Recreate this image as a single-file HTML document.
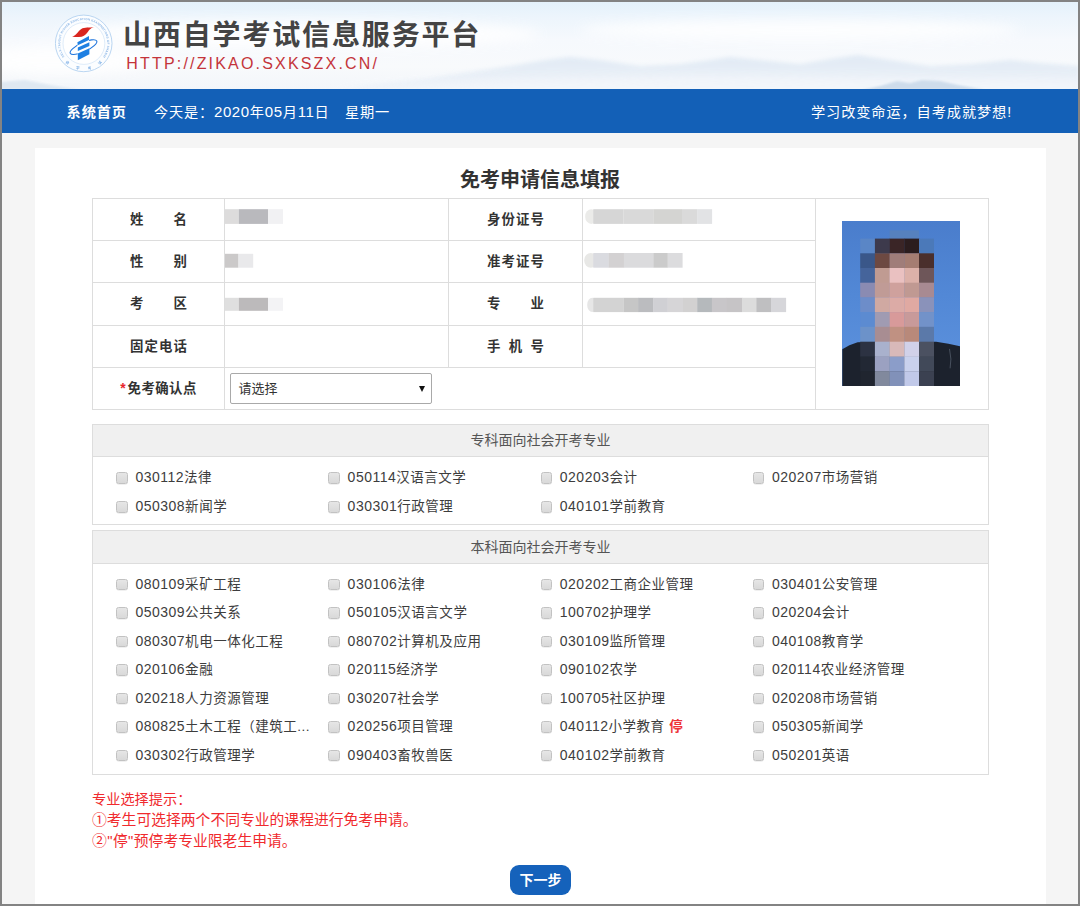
<!DOCTYPE html>
<html lang="zh-CN">
<head>
<meta charset="utf-8">
<title>山西自学考试信息服务平台</title>
<style>
*{box-sizing:border-box;margin:0;padding:0}
html,body{width:1080px;height:906px;overflow:hidden}
body{background:#f5f5f5;font-family:"Liberation Sans","Noto Sans CJK SC",sans-serif;color:#333;position:relative;font-size:14px}
.abs{position:absolute;white-space:nowrap}
#frame{position:absolute;left:0;top:0;width:1080px;height:906px;border:2px solid #838383;z-index:50;pointer-events:none}
#banner{position:absolute;left:0;top:0;width:1080px;height:89px;background:#f6f9fc;overflow:hidden}
#banner svg.sky{position:absolute;left:0;top:0}
#logo{position:absolute;left:54px;top:14px;width:60px;height:60px}
#sitename{left:123px;top:16.2px;font-size:28px;font-weight:bold;color:#444;letter-spacing:1.85px;line-height:40px}
#siteurl{left:126.3px;top:54px;font-size:16px;color:#c4343a;letter-spacing:2.18px;line-height:20px}
#nav{position:absolute;left:0;top:89px;width:1080px;height:44px;background:#1360b7;color:#fff;font-size:14.2px;letter-spacing:.8px;line-height:44px}
#nav em{font-style:normal;font-size:15px;letter-spacing:.6px}
#nav .abs{top:.8px}
#panel{position:absolute;left:35px;top:148px;width:1011px;height:760px;background:#fff}
#ftitle{left:340px;width:400px;text-align:center;top:164.5px;font-size:20px;font-weight:bold;color:#333;line-height:30px}
table#info{position:absolute;left:92px;top:198px;width:896px;height:212px;border-collapse:collapse;table-layout:fixed;font-size:14px}
#info td{border:1px solid #ddd;padding:0;height:42.2px;vertical-align:middle}
#info td.l{text-align:center;font-weight:bold;color:#333;font-size:13.4px}
#info td.l span{display:inline-block;width:57px;position:relative;top:-1.5px;text-align:justify;text-align-last:justify;white-space:nowrap}
.red{color:#e8282c}
.blur{position:absolute;border-radius:6px;filter:blur(.6px)}
#sel{position:absolute;left:230px;top:373px;width:202px;height:31px;border:1px solid #a9a9a9;border-radius:2px;background:#fff;font-size:13px;line-height:30px;padding-left:7.6px;color:#333}
#sel:after{content:"";position:absolute;right:6px;top:12px;border:3.5px solid transparent;border-top:6px solid #111;border-bottom:0}
.sec{position:absolute;left:92px;width:897px;border:1px solid #ddd;background:#fff}
.sec .h{height:33px;background:#f0f0f0;border-bottom:1px solid #ddd;text-align:center;font-size:14px;color:#555;line-height:32px}
.ck{position:absolute;white-space:nowrap;font-size:14px;color:#3d3d3d;line-height:20px;height:20px;display:block}
.ck i{position:absolute;left:1.5px;top:5.2px;width:11.5px;height:11.5px;border:1px solid #c2c2c2;border-radius:2.5px;background:linear-gradient(#e6e6e6,#d9d9d9);box-shadow:0 .5px .5px rgba(0,0,0,.12)}
.ck span{position:absolute;left:20.8px;top:.3px;font-size:13.5px;letter-spacing:.52px}
.ck em{font-style:normal;font-size:14px;letter-spacing:.5px}
.ck b.stop{color:#ee3338;font-weight:bold;font-size:13.5px;margin-left:.5px}
.hint{font-size:14.8px;line-height:20px;color:#f02a2e}
.hint i{font-style:normal;display:inline-block;width:14.8px;text-align:center}
.hint u{text-decoration:none;display:inline-block;width:6.1px;text-align:center}
#next{position:absolute;left:510px;top:865px;width:61px;height:30px;border-radius:9px;background:#1562bb;color:#fff;font-weight:bold;font-size:14px;line-height:30px;text-align:center;border:0}
</style>
</head>
<body>
<div id="banner">
<svg class="sky" width="1080" height="89" viewBox="0 0 1080 89">
<defs>
<linearGradient id="skyg" x1="0" y1="0" x2="0" y2="1">
<stop offset="0" stop-color="#e3f1fb"/><stop offset=".2" stop-color="#edf5fc"/><stop offset=".45" stop-color="#f6f9fd"/><stop offset=".75" stop-color="#f8fafc"/><stop offset="1" stop-color="#f3f6fa"/>
</linearGradient>
<linearGradient id="mtg" x1="0" y1="0" x2="0" y2="1">
<stop offset="0" stop-color="#dfe9f4"/><stop offset="1" stop-color="#eef3f9"/>
</linearGradient>
<filter id="b6" x="-10%" y="-50%" width="120%" height="200%"><feGaussianBlur stdDeviation="6"/></filter>
<filter id="b3" x="-10%" y="-50%" width="120%" height="200%"><feGaussianBlur stdDeviation="2"/></filter>
<filter id="b1" x="-10%" y="-50%" width="120%" height="200%"><feGaussianBlur stdDeviation="1.1"/></filter>
</defs>
<rect width="1080" height="89" fill="url(#skyg)"/>
<g filter="url(#b6)" fill="#ffffff" opacity=".85">
<ellipse cx="300" cy="34" rx="240" ry="14"/><ellipse cx="800" cy="30" rx="220" ry="10"/><ellipse cx="60" cy="60" rx="90" ry="14"/>
</g>
<path filter="url(#b3)" fill="url(#mtg)" opacity=".95" d="M330 92 L380 84 L430 78 L470 72 L510 66 L545 60 L570 57 L600 60 L640 66 L680 64 L710 60 L730 57 L760 60 L800 64 L830 59 L858 55 L890 60 L930 66 L970 64 L1010 60 L1040 63 L1080 66 L1080 92 Z"/>
<path filter="url(#b6)" fill="#f7f9fc" opacity=".7" d="M330 92 L500 80 L700 76 L860 78 L1080 80 L1080 92 Z"/>
<path filter="url(#b1)" fill="#cbdaea" opacity=".9" d="M862 90 L880 86 L897 81 L910 83 L922 80 L940 81 L958 85 L985 90 Z"/>
<path filter="url(#b1)" fill="#dde7f1" opacity=".9" d="M0 90 L0 82 L25 80 L50 85 L80 90 Z"/>
</svg>

<div id="logo"><svg width="60" height="60" viewBox="0 0 60 60" style="filter:blur(.35px)">
<defs>
<path id="arcT" d="M10.79 43.21 A23.5 23.5 0 1 1 48.81 43.21"/>
<path id="arcB" d="M9.73 46.24 A26.2 26.2 0 0 0 49.87 46.24"/>
<clipPath id="bk"><polygon points="23.4,28.3 35,21.5 35.4,40.2 23.8,46.2"/></clipPath>
</defs>
<circle cx="29.7" cy="29.4" r="28.3" fill="#fbfdff" stroke="#a9cbee" stroke-width=".8"/>
<circle cx="29.9" cy="29.5" r="20.9" fill="#ffffff" stroke="#c9dff5" stroke-width=".6"/>
<text font-family="Liberation Sans, sans-serif" font-size="3" font-weight="bold" fill="#8db7e6" textLength="102" lengthAdjust="spacing"><textPath href="#arcT" startOffset=".5" textLength="102" lengthAdjust="spacing">SELF-TAUGHT HIGHER EDUCATION EXAMINATIONS OF SHANXI</textPath></text>
<text font-family="Liberation Sans, Noto Sans CJK SC, sans-serif" font-size="3.6" font-weight="bold" fill="#7fb0e6" letter-spacing="8.6"><textPath href="#arcB" startOffset="2.7">自学考试</textPath></text>
<path d="M18.1 22.5 C22.8 21.6 23.5 17.4 27.3 15 C30.5 13 35 14 40.8 13.1 C36.6 14 35.8 15.6 33.6 18.2 C31.4 20.9 29 23 24.8 23.1 C22 23.2 20 22.9 18.1 22.5 Z" fill="#d9261f"/>
<ellipse cx="29.5" cy="33.1" rx="14.6" ry="4.5" transform="rotate(-24.8 29.5 33.1)" fill="none" stroke="#2277dd" stroke-width="1.1"/>
<polygon points="23.4,28.3 35,21.9 35.4,40.3 23.8,46.3" fill="#ffffff"/>
<polygon points="23.4,28.3 35,21.9 35,26 23.8,31.3" fill="#1f80e2"/>
<polygon points="23.8,33.5 35.4,28.3 35.4,32 23.8,37.1" fill="#1f80e2"/>
<polygon points="23.8,39.5 35.4,34.3 35.4,40.3 23.8,46.3" fill="#1f80e2"/>
</svg>
</div>
<div class="abs" id="sitename">山西自学考试信息服务平台</div>
<div class="abs" id="siteurl">HTTP://ZIKAO.SXKSZX.CN/</div>
</div>
<div id="nav">
<div class="abs" style="left:66.6px;font-weight:bold;letter-spacing:.9px">系统首页</div>
<div class="abs" style="left:154px">今天是：<em>2020</em>年<em>05</em>月<em>11</em>日</div>
<div class="abs" style="left:345px">星期一</div>
<div class="abs" style="left:811px;letter-spacing:.9px">学习改变命运，自考成就梦想!</div>
</div>
<div id="panel"></div>
<div class="abs" id="ftitle">免考申请信息填报</div>
<table id="info">
<colgroup><col style="width:132px"><col style="width:224px"><col style="width:134px"><col style="width:233px"><col style="width:173px"></colgroup>
<tr><td class="l"><span>姓名</span></td><td></td><td class="l"><span>身份证号</span></td><td></td><td rowspan="5" id="pcell"></td></tr>
<tr><td class="l"><span>性别</span></td><td></td><td class="l"><span>准考证号</span></td><td></td></tr>
<tr><td class="l"><span>考区</span></td><td></td><td class="l"><span>专业</span></td><td></td></tr>
<tr><td class="l"><span>固定电话</span></td><td></td><td class="l"><span>手机号</span></td><td></td></tr>
<tr><td class="l"><span style="width:auto;top:-1px;letter-spacing:.45px"><b class="red" style="margin-right:1.4px;font-size:14px">*</b>免考确认点</span></td><td colspan="3"></td></tr>
</table>
<div id="sel">请选择</div>
<svg style="position:absolute;left:842px;top:221px" width="118" height="165" viewBox="0 0 118 165">
<defs><linearGradient id="pbg" x1="0" y1="0" x2="0" y2="1"><stop offset="0" stop-color="#4a7dcc"/><stop offset=".45" stop-color="#5288d6"/><stop offset="1" stop-color="#5e93de"/></linearGradient></defs>
<rect width="118" height="165" fill="url(#pbg)"/>
<polygon points="0.3,128.3 7.4,124.2 15.6,121.3 32.9,120.7 77.0,120.7 94.2,120.7 106.4,122.8 118.3,125.4 118.3,165.0 0.3,165.0" fill="#1c222d"/>
<rect x="47.6" y="9.4" width="29.4" height="8.5" fill="#5681bd"/>
<rect x="18.2" y="17.6" width="15.0" height="15.0" fill="#5a86c6"/>
<rect x="32.9" y="17.6" width="15.0" height="15.0" fill="#3d3a4c"/>
<rect x="47.6" y="17.6" width="15.0" height="15.0" fill="#3a2526"/>
<rect x="62.3" y="17.6" width="15.0" height="15.0" fill="#2b1d1e"/>
<rect x="77.0" y="17.6" width="15.0" height="15.0" fill="#4b79b9"/>
<rect x="18.2" y="32.3" width="15.0" height="15.0" fill="#3a5789"/>
<rect x="32.9" y="32.3" width="15.0" height="15.0" fill="#6d4942"/>
<rect x="47.6" y="32.3" width="15.0" height="15.0" fill="#a07d79"/>
<rect x="62.3" y="32.3" width="15.0" height="15.0" fill="#a57d72"/>
<rect x="77.0" y="32.3" width="15.0" height="15.0" fill="#4a2f2c"/>
<rect x="18.2" y="47.0" width="15.0" height="15.0" fill="#45649b"/>
<rect x="32.9" y="47.0" width="15.0" height="15.0" fill="#c09b92"/>
<rect x="47.6" y="47.0" width="15.0" height="15.0" fill="#eac1c1"/>
<rect x="62.3" y="47.0" width="15.0" height="15.0" fill="#dcb1a9"/>
<rect x="77.0" y="47.0" width="15.0" height="15.0" fill="#6e5659"/>
<rect x="18.2" y="61.7" width="15.0" height="15.0" fill="#8a8bb2"/>
<rect x="32.9" y="61.7" width="15.0" height="15.0" fill="#c09b96"/>
<rect x="47.6" y="61.7" width="15.0" height="15.0" fill="#cfa19d"/>
<rect x="62.3" y="61.7" width="15.0" height="15.0" fill="#c09992"/>
<rect x="77.0" y="61.7" width="15.0" height="15.0" fill="#a88a92"/>
<rect x="18.2" y="76.4" width="15.0" height="15.0" fill="#6d8dc9"/>
<rect x="32.9" y="76.4" width="15.0" height="15.0" fill="#d0a9a2"/>
<rect x="47.6" y="76.4" width="15.0" height="15.0" fill="#dcaba6"/>
<rect x="62.3" y="76.4" width="15.0" height="15.0" fill="#e0a9a2"/>
<rect x="77.0" y="76.4" width="15.0" height="15.0" fill="#8a92ba"/>
<rect x="18.2" y="91.1" width="15.0" height="15.0" fill="#5c8bd1"/>
<rect x="32.9" y="91.1" width="15.0" height="15.0" fill="#a09bb2"/>
<rect x="47.6" y="91.1" width="15.0" height="15.0" fill="#d89a9a"/>
<rect x="62.3" y="91.1" width="15.0" height="15.0" fill="#c89a9a"/>
<rect x="77.0" y="91.1" width="15.0" height="15.0" fill="#7292c9"/>
<rect x="18.2" y="105.8" width="15.0" height="15.2" fill="#6c92c9"/>
<rect x="32.9" y="105.8" width="15.0" height="15.2" fill="#a88d92"/>
<rect x="47.6" y="105.8" width="15.0" height="15.2" fill="#c09182"/>
<rect x="62.3" y="105.8" width="15.0" height="15.2" fill="#b8897a"/>
<rect x="77.0" y="105.8" width="15.0" height="15.2" fill="#5b79a9"/>
<rect x="18.2" y="120.7" width="15.0" height="15.2" fill="#2c3242"/>
<rect x="32.9" y="120.7" width="15.0" height="15.2" fill="#a9b1cd"/>
<rect x="47.6" y="120.7" width="15.0" height="15.2" fill="#d8b9b9"/>
<rect x="62.3" y="120.7" width="15.0" height="15.2" fill="#d1d1e9"/>
<rect x="77.0" y="120.7" width="15.0" height="15.2" fill="#4b5161"/>
<rect x="18.2" y="135.6" width="15.0" height="15.0" fill="#222834"/>
<rect x="32.9" y="135.6" width="15.0" height="15.0" fill="#9ba1c1"/>
<rect x="47.6" y="135.6" width="15.0" height="15.0" fill="#8b9dc9"/>
<rect x="62.3" y="135.6" width="15.0" height="15.0" fill="#c9d1ed"/>
<rect x="77.0" y="135.6" width="15.0" height="15.0" fill="#414959"/>
<rect x="18.2" y="150.3" width="15.0" height="15.0" fill="#20252f"/>
<rect x="32.9" y="150.3" width="15.0" height="15.0" fill="#81899d"/>
<rect x="47.6" y="150.3" width="15.0" height="15.0" fill="#8191b9"/>
<rect x="62.3" y="150.3" width="15.0" height="15.0" fill="#c1c9e9"/>
<rect x="77.0" y="150.3" width="15.0" height="15.0" fill="#3b4151"/>
<path d="M107.5 127.9 L108.9 138.1 L108.1 147.3" stroke="#5a6472" stroke-width="1" fill="none" opacity=".7"/>
</svg>
<svg style="position:absolute;left:0;top:0" width="1080" height="420" viewBox="0 0 1080 420">
<rect x="225.0" y="209.2" width="13.8" height="14.7" fill="#dddcdc"/>
<rect x="238.8" y="209.2" width="29.2" height="14.7" fill="#b9b9bd"/>
<rect x="268.0" y="209.2" width="15.0" height="14.7" fill="#f1f1f3"/>
<rect x="225.0" y="253.8" width="13.5" height="13.9" fill="#cbc9c9"/>
<rect x="238.6" y="253.8" width="14.6" height="13.9" fill="#e9e9eb"/>
<rect x="225.0" y="297.8" width="13.8" height="13.0" fill="#dfdfdf"/>
<rect x="238.8" y="297.8" width="29.2" height="13.0" fill="#bcbabb"/>
<rect x="268.0" y="297.8" width="15.0" height="13.0" fill="#f3f3f5"/>
<rect x="585.2" y="209.2" width="12.1" height="14.7" rx="7" fill="#ebebe9"/>
<rect x="593.3" y="209.2" width="30.3" height="14.7" fill="#d6d6d6"/>
<rect x="623.5" y="209.2" width="30.1" height="14.7" fill="#d9d9d9"/>
<rect x="653.4" y="209.2" width="28.7" height="14.7" fill="#d4d4d2"/>
<rect x="681.9" y="209.2" width="15.5" height="14.7" fill="#dadada"/>
<rect x="697.2" y="209.2" width="14.9" height="14.7" fill="#e2e3e5"/>
<rect x="584.2" y="253.0" width="13.2" height="14.7" rx="7" fill="#e8e8e6"/>
<rect x="593.3" y="253.0" width="15.5" height="14.7" fill="#dadbe0"/>
<rect x="608.6" y="253.0" width="15.5" height="14.7" fill="#d3d1d2"/>
<rect x="623.9" y="253.0" width="29.7" height="14.7" fill="#dbdbdd"/>
<rect x="653.4" y="253.0" width="14.5" height="14.7" fill="#cbcbcb"/>
<rect x="667.7" y="253.0" width="14.9" height="14.7" fill="#dcdcde"/>
<rect x="587.2" y="297.8" width="10.1" height="14.3" rx="7" fill="#e6e6e6"/>
<rect x="593.3" y="297.8" width="30.3" height="14.3" fill="#d3d3d3"/>
<rect x="623.5" y="297.8" width="14.9" height="14.3" fill="#c6c6c6"/>
<rect x="638.1" y="297.8" width="15.5" height="14.3" fill="#bbbcbf"/>
<rect x="653.4" y="297.8" width="14.5" height="14.3" fill="#d0d0d4"/>
<rect x="667.7" y="297.8" width="15.5" height="14.3" fill="#d6d5d7"/>
<rect x="683.0" y="297.8" width="14.5" height="14.3" fill="#d2d1d1"/>
<rect x="697.2" y="297.8" width="14.9" height="14.3" fill="#b5b9bc"/>
<rect x="711.9" y="297.8" width="15.1" height="14.3" fill="#c8c6c9"/>
<rect x="726.8" y="297.8" width="15.5" height="14.3" fill="#c6c4c6"/>
<rect x="742.0" y="297.8" width="14.5" height="14.3" fill="#dcdcdc"/>
<rect x="756.3" y="297.8" width="14.9" height="14.3" fill="#bfbfc1"/>
<rect x="771.0" y="297.8" width="15.1" height="14.3" fill="#d6d6da"/>
</svg>
<div class="sec" style="top:424px;height:101px"><div class="h" style="height:32px;line-height:31px">专科面向社会开考专业</div></div>
<div class="sec" style="top:530px;height:245px"><div class="h">本科面向社会开考专业</div></div>
<label class="ck" style="left:114.6px;top:467.2px"><i></i><span><em>030112</em>法律</span></label>
<label class="ck" style="left:326.8px;top:467.2px"><i></i><span><em>050114</em>汉语言文学</span></label>
<label class="ck" style="left:539.0px;top:467.2px"><i></i><span><em>020203</em>会计</span></label>
<label class="ck" style="left:751.2px;top:467.2px"><i></i><span><em>020207</em>市场营销</span></label>
<label class="ck" style="left:114.6px;top:496.0px"><i></i><span><em>050308</em>新闻学</span></label>
<label class="ck" style="left:326.8px;top:496.0px"><i></i><span><em>030301</em>行政管理</span></label>
<label class="ck" style="left:539.0px;top:496.0px"><i></i><span><em>040101</em>学前教育</span></label>
<label class="ck" style="left:114.6px;top:573.5px"><i></i><span><em>080109</em>采矿工程</span></label>
<label class="ck" style="left:326.8px;top:573.5px"><i></i><span><em>030106</em>法律</span></label>
<label class="ck" style="left:539.0px;top:573.5px"><i></i><span><em>020202</em>工商企业管理</span></label>
<label class="ck" style="left:751.2px;top:573.5px"><i></i><span><em>030401</em>公安管理</span></label>
<label class="ck" style="left:114.6px;top:602.0px"><i></i><span><em>050309</em>公共关系</span></label>
<label class="ck" style="left:326.8px;top:602.0px"><i></i><span><em>050105</em>汉语言文学</span></label>
<label class="ck" style="left:539.0px;top:602.0px"><i></i><span><em>100702</em>护理学</span></label>
<label class="ck" style="left:751.2px;top:602.0px"><i></i><span><em>020204</em>会计</span></label>
<label class="ck" style="left:114.6px;top:630.6px"><i></i><span><em>080307</em>机电一体化工程</span></label>
<label class="ck" style="left:326.8px;top:630.6px"><i></i><span><em>080702</em>计算机及应用</span></label>
<label class="ck" style="left:539.0px;top:630.6px"><i></i><span><em>030109</em>监所管理</span></label>
<label class="ck" style="left:751.2px;top:630.6px"><i></i><span><em>040108</em>教育学</span></label>
<label class="ck" style="left:114.6px;top:659.1px"><i></i><span><em>020106</em>金融</span></label>
<label class="ck" style="left:326.8px;top:659.1px"><i></i><span><em>020115</em>经济学</span></label>
<label class="ck" style="left:539.0px;top:659.1px"><i></i><span><em>090102</em>农学</span></label>
<label class="ck" style="left:751.2px;top:659.1px"><i></i><span><em>020114</em>农业经济管理</span></label>
<label class="ck" style="left:114.6px;top:687.7px"><i></i><span><em>020218</em>人力资源管理</span></label>
<label class="ck" style="left:326.8px;top:687.7px"><i></i><span><em>030207</em>社会学</span></label>
<label class="ck" style="left:539.0px;top:687.7px"><i></i><span><em>100705</em>社区护理</span></label>
<label class="ck" style="left:751.2px;top:687.7px"><i></i><span><em>020208</em>市场营销</span></label>
<label class="ck" style="left:114.6px;top:716.2px"><i></i><span><em>080825</em>土木工程（建筑工...</span></label>
<label class="ck" style="left:326.8px;top:716.2px"><i></i><span><em>020256</em>项目管理</span></label>
<label class="ck" style="left:539.0px;top:716.2px"><i></i><span><em>040112</em>小学教育 <b class="stop">停</b></span></label>
<label class="ck" style="left:751.2px;top:716.2px"><i></i><span><em>050305</em>新闻学</span></label>
<label class="ck" style="left:114.6px;top:744.8px"><i></i><span><em>030302</em>行政管理学</span></label>
<label class="ck" style="left:326.8px;top:744.8px"><i></i><span><em>090403</em>畜牧兽医</span></label>
<label class="ck" style="left:539.0px;top:744.8px"><i></i><span><em>040102</em>学前教育</span></label>
<label class="ck" style="left:751.2px;top:744.8px"><i></i><span><em>050201</em>英语</span></label>
<div class="abs hint" style="left:92px;top:788.5px;font-size:14.2px">专业选择提示：</div>
<div class="abs hint" style="left:92px;top:809.7px"><i>①</i>考生可选择两个不同专业的课程进行免考申请。</div>
<div class="abs hint" style="left:92px;top:830.8px"><i>②</i><u>"</u>停<u>"</u>预停考专业限老生申请。</div>
<div id="next">下一步</div>
<div id="frame"></div>
</body>
</html>
